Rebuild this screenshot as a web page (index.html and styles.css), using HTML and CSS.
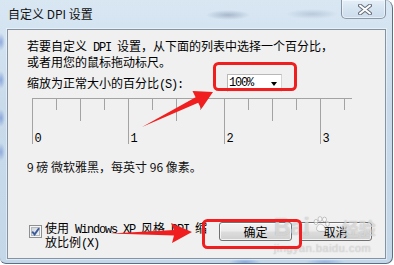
FILE: index.html
```html
<!DOCTYPE html>
<html lang="zh-CN">
<head>
<meta charset="utf-8">
<title>自定义 DPI 设置</title>
<link rel="stylesheet" href="styles.css">
</head>
<body>
<div class="window">
  <div class="titlebar">
    <span class="title">自定义 DPI 设置</span>
    <button class="close" aria-label="关闭">
      <svg width="14" height="11" viewBox="0 0 14 11">
        <path d="M2 1.5 L12 9.5 M12 1.5 L2 9.5" stroke="#66707c" stroke-width="4" stroke-linecap="round"/>
        <path d="M2 1.5 L12 9.5 M12 1.5 L2 9.5" stroke="#ffffff" stroke-width="2" stroke-linecap="round"/>
      </svg>
    </button>
  </div>
  <div class="client">
    <p class="intro">若要自定义<span class="mono"> DPI </span>设置，从下面的列表中选择一个百分比，<br>或者用您的鼠标拖动标尺。</p>
    <div class="scale-row">
      <label class="scale-label">缩放为正常大小的百分比<span class="mono">(S):</span></label>
      <div class="combo"><span class="mono">100%</span><span class="caret"></span></div>
    </div>
    <svg class="ruler" width="330" height="55" viewBox="0 0 330 55">
      <g stroke="#a3a3a3" stroke-width="1" fill="none">
        <path d="M5 6.5 H325"/>
        <path d="M5.5 6 V52 M101.5 6 V52 M197.5 6 V52 M293.5 6 V52"/>
        <path d="M53.5 6 V29 M149.5 6 V29 M245.5 6 V29"/>
        <path d="M29.5 6 V18 M77.5 6 V18 M125.5 6 V18 M173.5 6 V18 M221.5 6 V18 M269.5 6 V18 M317.5 6 V18"/>
      </g>
      <g class="ruler-num">
        <text x="7.5" y="50">0</text>
        <text x="103.5" y="50">1</text>
        <text x="199.5" y="50">2</text>
        <text x="295.5" y="50">3</text>
      </g>
    </svg>
    <p class="font-info">9 磅 微软雅黑，每英寸 96 像素。</p>
    <div class="bottom-row">
      <div class="check">
        <svg class="checkbox" width="13" height="13" viewBox="0 0 13 13">
          <defs>
            <linearGradient id="cbg" x1="0" y1="0" x2="1" y2="1">
              <stop offset="0" stop-color="#cfd4da"/>
              <stop offset="1" stop-color="#f4f6f8"/>
            </linearGradient>
          </defs>
          <rect x="0.5" y="0.5" width="12" height="12" fill="#f6f6f6" stroke="#8e8f8f"/>
          <rect x="2.5" y="2.5" width="8" height="8" fill="url(#cbg)" stroke="#b4b9bf"/>
          <path d="M3.2 6.6 L5.6 9.4 L10 3.2" fill="none" stroke="#3d5b9a" stroke-width="1.9"/>
        </svg>
        <span class="check-text">使用<span class="mono"> Windows XP </span>风格<span class="mono"> DPI </span>缩<br>放比例<span class="mono">(X)</span></span>
      </div>
      <div class="buttons">
        <button class="btn">确定</button>
        <button class="btn">取消</button>
      </div>
    </div>
  </div>
  <div class="watermark">
    <div class="wm-top"><span class="wm-bai">Bai</span><svg class="wm-paw" width="18" height="18" viewBox="0 0 18 18"><g fill="rgba(255,255,255,0.55)" stroke="rgba(140,140,140,0.45)"><ellipse cx="4" cy="6" rx="2" ry="2.6"/><ellipse cx="8" cy="3" rx="2" ry="2.4"/><ellipse cx="12.5" cy="3.5" rx="2" ry="2.4"/><ellipse cx="15.5" cy="8" rx="1.8" ry="2.4"/><path d="M9 8 C5 8 3 14 6 15 C8 16 10 15 12 15.5 C15 16 15 11 9 8 Z"/></g></svg><span class="wm-jy">经验</span></div>
    <div class="wm-url">jingyan.baidu.com</div>
  </div>
  <svg class="annot" width="394" height="265" viewBox="0 0 394 265">
    <rect x="214.5" y="63.5" width="81" height="26" rx="4" fill="none" stroke="#f01e1e" stroke-width="3"/>
    <rect x="203.5" y="220.5" width="97" height="27" rx="4" fill="none" stroke="#f01e1e" stroke-width="3"/>
    <path d="M142 127 L195.6 97.3 L192.5 91 L213 92 L201.3 109 L198.2 102.7 Z" fill="#f01e1e"/>
    <path d="M110 233.5 L174 230 L171 223 L192 232 L172 243 L174 235.5 Z" fill="#f01e1e"/>
  </svg>
</div>
</body>
</html>
```
FILE: styles.css
```css
* {
  box-sizing: border-box;
  margin: 0;
  padding: 0;
}

html, body {
  width: 394px;
  height: 265px;
  background: #ffffff;
  overflow: hidden;
}

body {
  font-family: "Noto Sans CJK SC", sans-serif;
  font-size: 12px;
  color: #000;
}

.window {
  position: relative;
  width: 393px;
  height: 264px;
  display: flex;
  flex-direction: column;
  border-right: 1px solid #5d6f82;
  border-bottom: 1px solid #5d6f82;
  border-radius: 0 8px 7px 6px;
  background:
    radial-gradient(22px 5px at 228px 15px, rgba(110, 130, 160, 0.45), rgba(110, 130, 160, 0)),
    radial-gradient(26px 5px at 312px 14px, rgba(130, 150, 175, 0.35), rgba(130, 150, 175, 0)),
    radial-gradient(4px 9px at 1px 42px, rgba(60, 100, 200, 0.45), rgba(60, 100, 200, 0)),
    radial-gradient(4px 9px at 1px 80px, rgba(60, 100, 200, 0.45), rgba(60, 100, 200, 0)),
    radial-gradient(4px 9px at 1px 118px, rgba(60, 100, 200, 0.45), rgba(60, 100, 200, 0)),
    radial-gradient(4px 9px at 1px 152px, rgba(60, 100, 200, 0.4), rgba(60, 100, 200, 0)),
    radial-gradient(16px 3px at 245px 262px, rgba(60, 110, 210, 0.45), rgba(60, 110, 210, 0)),
    radial-gradient(20px 3px at 325px 262px, rgba(60, 110, 210, 0.35), rgba(60, 110, 210, 0)),
    linear-gradient(180deg, #d9e7f3 0%, #c9dbeb 40%, #c3d7e9 100%);
}

.titlebar {
  height: 29px;
  display: flex;
  align-items: flex-start;
  justify-content: space-between;
  padding-left: 8px;
}

.title {
  margin-top: 7px;
  line-height: 14px;
  font-size: 12px;
  color: #111;
}

.close {
  width: 45px;
  height: 19px;
  margin-right: 6px;
  border: 1px solid rgba(70, 85, 105, 0.55);
  border-top: none;
  border-radius: 0 0 5px 5px;
  background: linear-gradient(180deg, #e3eef8 0%, #d6e4f1 50%, #cbdcec 100%);
  box-shadow: inset 0 0 0 1px rgba(255, 255, 255, 0.5);
  display: flex;
  align-items: center;
  justify-content: center;
  padding: 0 0 0 3px;
}

.close svg {
  display: block;
}

.client {
  height: 230px;
  margin: 0 6px 0 7px;
  border: 1px solid #8493a3;
  box-shadow: 0 0 0 1px rgba(255, 255, 255, 0.45);
  background: #f0f0f0;
  display: flex;
  flex-direction: column;
  padding: 9px 13px 8px 19px;
}

.mono {
  font-family: "Liberation Mono", monospace;
  font-size: 12px;
  letter-spacing: -1.2px;
}

.intro {
  line-height: 14px;
  white-space: nowrap;
}

.scale-row {
  display: flex;
  align-items: flex-end;
  margin-top: 5px;
}

.scale-label {
  width: 200px;
  line-height: 14px;
  white-space: nowrap;
}

.combo {
  width: 55px;
  height: 18px;
  border: 1px solid #b8b8b8;
  border-right-color: #d4d4d4;
  border-bottom-color: #e6e6e6;
  background: #ffffff;
  display: flex;
  align-items: center;
  justify-content: space-between;
  padding: 0 4px 0 1px;
  line-height: 14px;
}

.caret {
  width: 0;
  height: 0;
  margin-top: 2px;
  border-left: 3.5px solid transparent;
  border-right: 3.5px solid transparent;
  border-top: 4px solid #000;
}

.ruler {
  display: block;
}

.ruler-num text {
  font-family: "Liberation Mono", monospace;
  font-size: 12px;
  fill: #000;
}

.font-info {
  margin-top: 13px;
  line-height: 14px;
  color: #111;
  white-space: nowrap;
}

.bottom-row {
  margin-top: auto;
  display: flex;
  align-items: flex-start;
}

.check {
  display: flex;
  align-items: flex-start;
}

.checkbox {
  display: block;
  margin: 3px 0 0 2px;
}

.check-text {
  margin-left: 3px;
  line-height: 12px;
  white-space: nowrap;
}

.buttons {
  margin-left: auto;
  display: flex;
  gap: 7px;
}

.btn {
  width: 73px;
  height: 19px;
  border: 1px solid #707070;
  border-radius: 3px;
  background: linear-gradient(180deg, #f2f2f2 0%, #ebebeb 48%, #dddddd 52%, #cfcfcf 100%);
  box-shadow: inset 0 0 0 1px rgba(255, 255, 255, 0.75);
  font-family: "Noto Sans CJK SC", sans-serif;
  font-size: 12px;
  line-height: 17px;
  color: #000;
  padding: 0;
}

.watermark {
  position: absolute;
  left: 274px;
  top: 212px;
  pointer-events: none;
  color: rgba(255, 255, 255, 0.55);
  text-shadow: 0 0 1px rgba(110, 110, 110, 0.55);
}

.wm-top {
  display: flex;
  align-items: flex-end;
  height: 28px;
}

.wm-bai {
  font-family: "Liberation Sans", sans-serif;
  font-weight: bold;
  font-size: 23px;
  line-height: 26px;
}

.wm-paw {
  display: block;
  margin: 0 2px 6px 2px;
}

.wm-jy {
  font-family: "Noto Sans CJK SC", sans-serif;
  font-weight: bold;
  font-size: 17px;
  line-height: 24px;
  margin-left: 10px;
}

.wm-url {
  font-family: "Liberation Sans", sans-serif;
  font-size: 11px;
  line-height: 12px;
  margin-top: 2px;
  letter-spacing: 0.5px;
  color: rgba(255, 255, 255, 0.5);
}

.annot {
  position: absolute;
  left: 0;
  top: 0;
  pointer-events: none;
}
```
